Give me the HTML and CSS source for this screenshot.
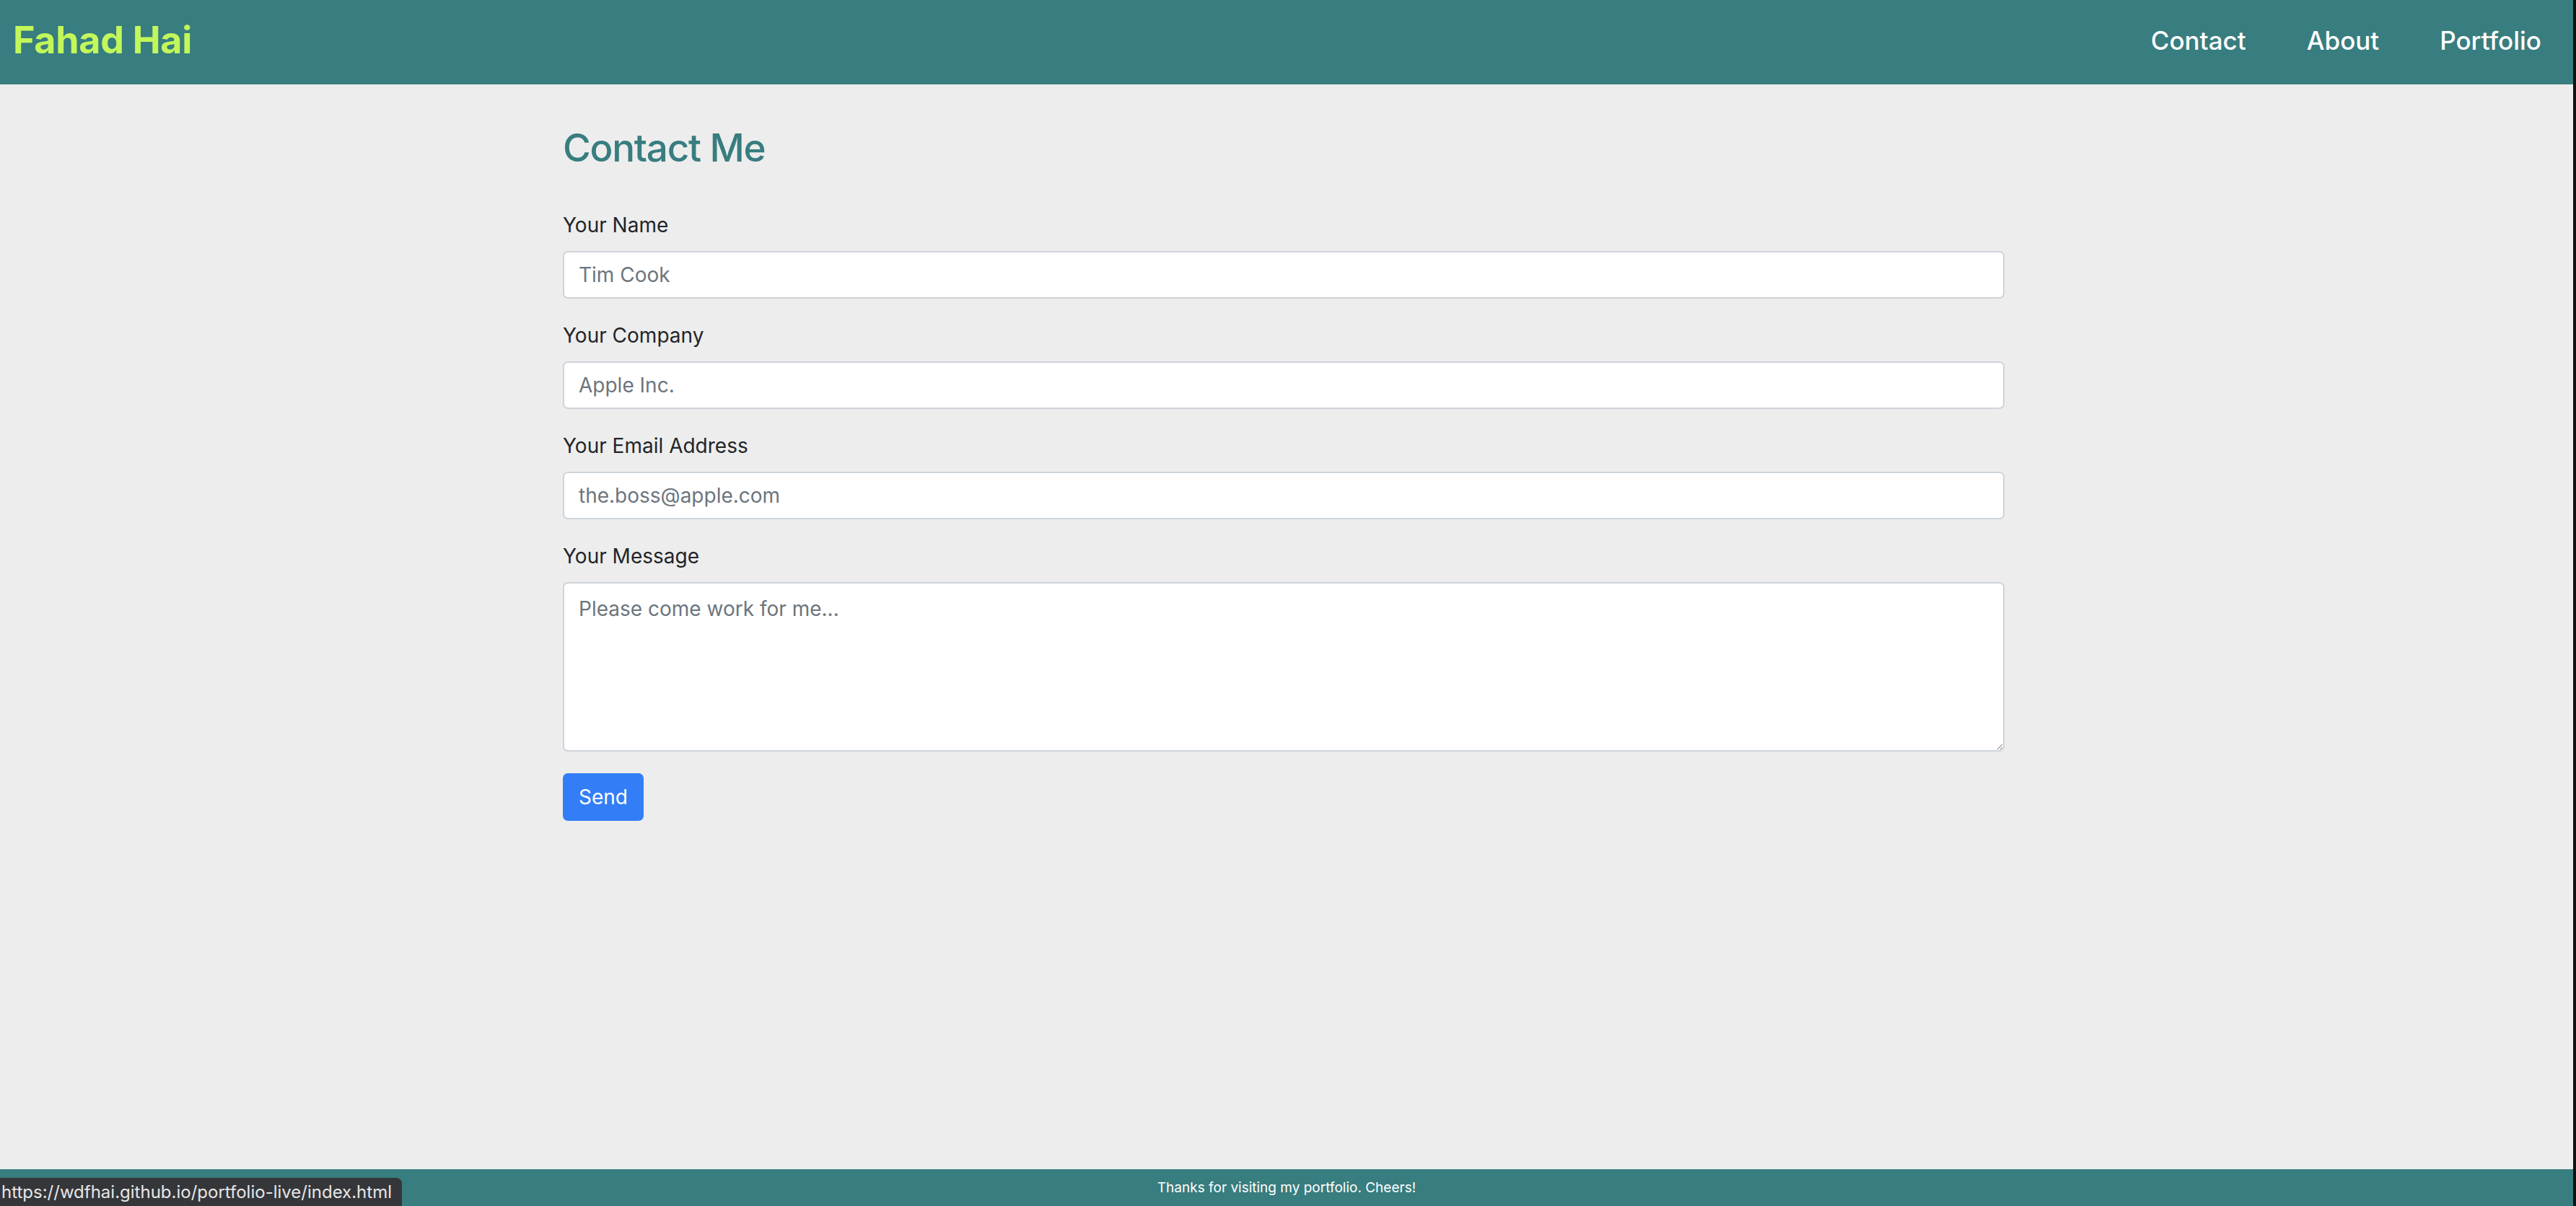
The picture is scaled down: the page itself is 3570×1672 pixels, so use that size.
FILE: index.html
```html
<!DOCTYPE html>
<html lang="en">
<head>
<meta charset="utf-8">
<title>Fahad Hai - Contact</title>
<link rel="stylesheet" href="styles.css">
</head>
<body>
<div class="page">
  <header class="topbar">
    <a class="brand" href="#">Fahad Hai</a>
    <nav class="nav">
      <a class="nav-link" href="#">Contact</a>
      <a class="nav-link" href="#">About</a>
      <a class="nav-link" href="#">Portfolio</a>
    </nav>
  </header>
  <main class="content">
    <h2 class="title">Contact Me</h2>
    <form class="form">
      <div class="group">
        <label class="label" for="name">Your Name</label>
        <input class="field" id="name" type="text" placeholder="Tim Cook">
      </div>
      <div class="group">
        <label class="label" for="company">Your Company</label>
        <input class="field" id="company" type="text" placeholder="Apple Inc.">
      </div>
      <div class="group">
        <label class="label" for="email">Your Email Address</label>
        <input class="field" id="email" type="email" placeholder="the.boss@apple.com">
      </div>
      <div class="group">
        <label class="label" for="msg">Your Message</label>
        <textarea class="field area" id="msg" placeholder="Please come work for me..."></textarea>
      </div>
      <button class="send" type="button">Send</button>
    </form>
  </main>
  <footer class="footer">Thanks for visiting my portfolio. Cheers!</footer>
</div>
<div class="status">https://wdfhai.github.io/portfolio-live/index.html</div>
</body>
</html>
```
FILE: styles.css
```css
html {
  background: #111111;
}
body {
  margin: 0 4px 0 0;
  font-family: Inter, "Noto Sans", sans-serif;
  background: #ededed;
  color: #212529;
}
.page {
  min-height: 100vh;
  display: flex;
  flex-direction: column;
}
.topbar {
  box-sizing: border-box;
  height: 117px;
  background: #387d7f;
  display: flex;
  align-items: center;
  justify-content: space-between;
  padding: 0 44px 6px 18px;
}
.brand {
  color: #c2f75b;
  font-weight: 700;
  font-size: 52px;
  text-decoration: none;
  letter-spacing: -0.3px;
}
.nav {
  display: flex;
  gap: 84px;
}
.nav-link {
  color: #ffffff;
  font-size: 35px;
  font-weight: 500;
  text-decoration: none;
}
.content {
  flex: 1;
  width: 1998px;
  margin: 0 auto;
  padding: 54px 8px 0 0;
}
.title {
  margin: 0 0 52px;
  font-size: 53px;
  line-height: 68px;
  font-weight: 500;
  letter-spacing: -1.3px;
  color: #387d7f;
}
.form {
  display: flex;
  flex-direction: column;
  align-items: flex-start;
}
.group {
  width: 100%;
  display: flex;
  flex-direction: column;
  margin-bottom: 30px;
}
.label {
  font-size: 28px;
  line-height: 43px;
  margin-bottom: 14px;
}
.field {
  box-sizing: border-box;
  width: 100%;
  height: 66px;
  border: 2px solid #ced4da;
  border-radius: 7px;
  background: #ffffff;
  padding: 0 20px;
  font-family: inherit;
  font-size: 28px;
  color: #495057;
  outline: none;
}
.field::placeholder {
  color: #6c757d;
}
.area {
  height: 235px;
  padding: 14px 20px;
  line-height: 43px;
  resize: vertical;
}
.send {
  height: 66px;
  width: 112px;
  border: none;
  border-radius: 7px;
  background: #337ef6;
  color: #ffffff;
  font-family: inherit;
  font-size: 28px;
}
.footer {
  height: 51px;
  background: #387d7f;
  color: #ffffff;
  font-size: 19px;
  display: flex;
  align-items: center;
  justify-content: center;
}
.status {
  position: fixed;
  left: 0;
  bottom: 0;
  height: 39px;
  padding: 0 14px 0 2px;
  background: #35363a;
  color: #e6e6e6;
  font-size: 24px;
  line-height: 39px;
  border-top-right-radius: 8px;
}
```
